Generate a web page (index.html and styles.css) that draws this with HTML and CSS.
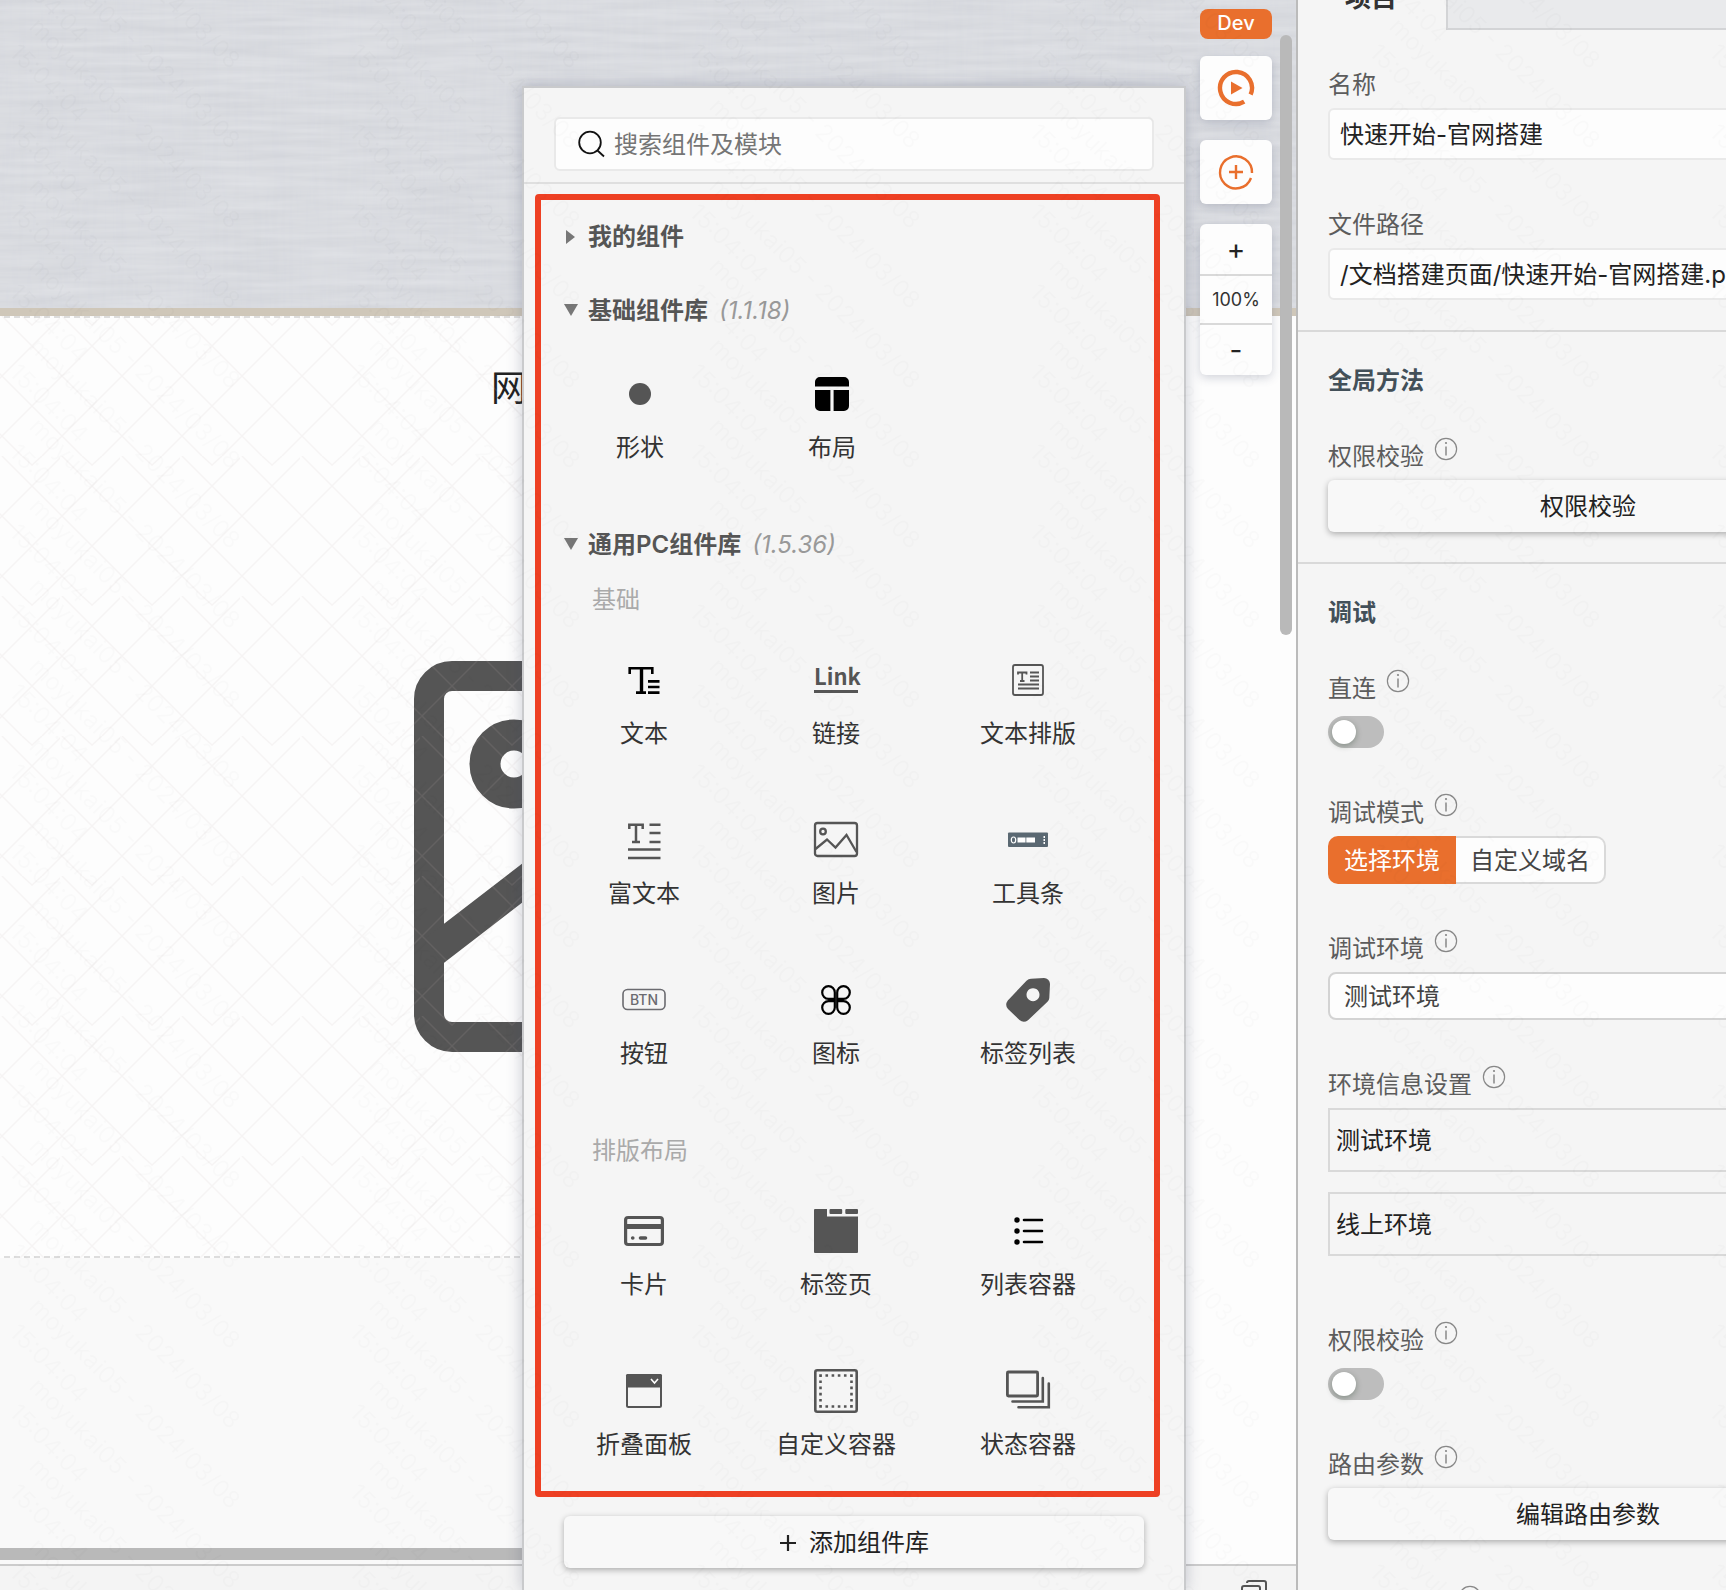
FILE: index.html
```html
<!DOCTYPE html>
<html lang="zh-CN">
<head>
<meta charset="utf-8">
<meta name="viewport" content="width=device-width, initial-scale=1">
<title>快速开始-官网搭建</title>
<link rel="stylesheet" href="styles.css">
</head>
<body>
<svg class="defs" aria-hidden="true">
  <defs>
    <filter id="warp" x="0" y="0" width="100%" height="100%">
      <feTurbulence type="fractalNoise" baseFrequency="0.15 0.01" numOctaves="3" seed="4"/>
      <feColorMatrix values="0 0 0 0 .6  0 0 0 0 .62  0 0 0 0 .68  .4 0 0 0 -.15"/>
    </filter>
    <filter id="weft" x="0" y="0" width="100%" height="100%">
      <feTurbulence type="fractalNoise" baseFrequency="0.01 0.15" numOctaves="3" seed="9"/>
      <feColorMatrix values="0 0 0 0 .9  0 0 0 0 .91  0 0 0 0 .93  .5 0 0 0 -.1"/>
    </filter>
    <pattern id="lattice" width="60" height="140" patternUnits="userSpaceOnUse">
      <path d="M2 0l140 140M-58 0L82 140M-118 0L22 140M62 0L-78 140M122 0L-18 140M182 0L42 140M22 0l10 9 10-9" fill="none" stroke="#c8b4b4" stroke-opacity=".12" stroke-width="1.5"/>
    </pattern>
    <g id="stamp">
      <text transform="translate(28 28) rotate(45)">moyukai05 - 2024/03/08</text>
      <text transform="translate(8 54) rotate(45)">15:04:04</text>
    </g>
    <pattern id="stamps" width="340" height="80" patternUnits="userSpaceOnUse">
      <use href="#stamp" y="-160"/><use href="#stamp" y="-80"/><use href="#stamp"/>
    </pattern>
    <symbol id="info" viewBox="0 0 24 24">
      <circle cx="12" cy="12" r="10.6" fill="none" stroke="#888" stroke-width="1.2"/>
      <path d="M12 9.5v9" stroke="#888" stroke-width="1.5"/><circle cx="12" cy="6" r="1.1" fill="#888"/>
    </symbol>
  </defs>
</svg>

<div class="app">
  <main class="workspace">
    <div class="canvas">
      <div class="banner">
        <svg class="fill" aria-hidden="true"><rect width="100%" height="100%" filter="url(#warp)"/><rect width="100%" height="100%" filter="url(#weft)"/></svg>
      </div>
      <div class="page">
        <div class="stage">
          <h1 class="site-title">网站标题</h1>
          <svg class="placeholder" viewBox="0 0 391 391" aria-hidden="true">
            <rect x="15" y="15" width="361" height="361" rx="23" fill="none" stroke="#555" stroke-width="30"/>
            <circle cx="100" cy="103" r="29" fill="none" stroke="#555" stroke-width="31"/>
            <path d="M20 290L185 163L376 309" fill="none" stroke="#555" stroke-width="31"/>
          </svg>
          <svg class="fill" aria-hidden="true"><rect width="100%" height="100%" fill="url(#lattice)"/></svg>
        </div>
        <div class="blank"></div>
      </div>
      <div class="h-scroll"></div>
    </div>
    <footer class="status">
      <svg width="26" height="26" viewBox="0 0 26 26" fill="none" stroke="#555" stroke-width="2" aria-hidden="true"><path d="M6 3V3a2 2 0 0 1 2-2H23a2 2 0 0 1 2 2V18"/><rect x="1" y="6" width="18" height="18" rx="2"/></svg>
    </footer>
    <div class="v-scroll"></div>

    <nav class="tools">
      <span class="env">Dev</span>
      <button class="tool" aria-label="预览">
        <svg width="40" height="40" viewBox="-20 -20 40 40" aria-hidden="true"><path d="M8.2 13.7A16 16 0 1 1 14.6 6.5" fill="none" stroke="#e96f2d" stroke-width="4.4"/><path d="M-5-6.5L6.5 0-5 6.5z" fill="#e96f2d"/></svg>
      </button>
      <button class="tool" aria-label="添加">
        <svg width="40" height="40" viewBox="-20 -20 40 40" fill="none" stroke="#e96f2d" stroke-width="2.4" aria-hidden="true"><path d="M15 6A16 16 0 1 1 16 1M0-7V7M-7 0H7"/></svg>
      </button>
      <div class="zoom">
        <button>+</button>
        <span>100%</span>
        <button>-</button>
      </div>
    </nav>

    <section class="panel">
      <header class="panel-head">
        <label class="search">
          <svg width="28" height="28" viewBox="0 0 28 28" fill="none" stroke="#111" stroke-width="1.8" aria-hidden="true"><circle cx="12" cy="12.500" r="10.800"/><path d="M19.500 20.500l6.500 6"/></svg>
          <input type="text" placeholder="搜索组件及模块" aria-label="搜索组件及模块">
        </label>
      </header>

      <div class="library">
        <div class="lib">
          <h2 class="lib-title"><span class="arrow arrow-right"></span>我的组件</h2>
        </div>

        <div class="lib">
          <h2 class="lib-title"><span class="arrow arrow-down"></span>基础组件库<em>(1.1.18)</em></h2>
          <div class="grid grid-top">
            <div class="item"><svg class="icon" viewBox="0 0 48 48"><circle cx="24" cy="24" r="11" fill="#555"/></svg>形状</div>
            <div class="item"><svg class="icon" viewBox="0 0 48 48"><path d="M7 16.5V12a5 5 0 0 1 5-5H36a5 5 0 0 1 5 5V16.5zM7 20H22.4V41H12a5 5 0 0 1-5-5zM25.6 20H41V36a5 5 0 0 1-5 5H25.6z"/></svg>布局</div>
          </div>
        </div>

        <div class="lib">
          <h2 class="lib-title"><span class="arrow arrow-down"></span>通用PC组件库<em>(1.5.36)</em></h2>
          <h3 class="group-title">基础</h3>
          <div class="grid">
            <div class="item"><svg class="icon" viewBox="0 0 48 48" fill="none" stroke="#000"><path d="M9.7 18V12.3H32.3V18" stroke-width="2.6"/><path d="M21.5 12V36" stroke-width="3.4"/><path d="M16 36.6H26M28 25.4H39.5M28 31H39.5M28 36.6H39.5" stroke-width="2.6"/></svg>文本</div>
            <div class="item"><span class="icon icon-link">Link</span>链接</div>
            <div class="item"><svg class="icon" viewBox="0 0 48 48" fill="none" stroke="#555" stroke-width="1.8"><rect x="9" y="9" width="30" height="30" rx="2"/><path d="M14 18.5V16.5H22.5V18.5M18.2 16.5V25M16 25H20.5M26 16.5H35M26 20.5H35M26 24.5H35M14 28.5H35M14 32.5H35"/></svg>文本排版</div>
            <div class="item"><svg class="icon" viewBox="0 0 48 48" fill="none" stroke="#555" stroke-width="2.5"><path d="M9.3 13V8.7H22.7V13M16 8.7V26M12 26H20M29.5 8.7H40.5M29.5 17H40.5M29.5 26H40.5M8 33.5H40.5M8 42H40.5"/></svg>富文本</div>
            <div class="item"><svg class="icon" viewBox="0 0 48 48" fill="none" stroke="#555" stroke-width="2.3"><rect x="3" y="7" width="42" height="33" rx="2.5"/><circle cx="11" cy="15.5" r="2.8"/><path d="M3.5 33L15 23.5L23.5 31.5L34.5 19L44.5 36"/></svg>图片</div>
            <div class="item"><svg class="icon" viewBox="0 0 48 48"><rect x="4" y="16.5" width="40" height="14.5" rx="1" fill="#5a6872"/><ellipse cx="9.5" cy="24" rx="2.2" ry="3" fill="none" stroke="#fff" stroke-width="1.2"/><path d="M13.5 21.5H21.5V26.5H13.5zM22.3 21.5H31V26.5H22.3zM39.5 20H41V22H39.5zM39.5 23H41V25H39.5zM39.5 26H41V28H39.5z" fill="#fff"/></svg>工具条</div>
            <div class="item"><svg class="icon" viewBox="0 0 48 48"><rect x="3" y="13.5" width="42" height="20" rx="4.5" fill="none" stroke="#6b6b70" stroke-width="1.6"/><text class="icon-btn" x="24" y="28.5">BTN</text></svg>按钮</div>
            <div class="item"><svg class="icon" viewBox="0 0 48 48" fill="none" stroke="#000" stroke-width="2.2"><path d="M22.8 16.5a6.3 6.3 0 1 0-6.3 6.3H22.8zM25.2 16.5a6.3 6.3 0 1 1 6.3 6.3H25.2zM22.8 31.5a6.3 6.3 0 1 1-6.3-6.3H22.8zM25.2 31.5a6.3 6.3 0 1 0 6.3-6.3H25.2z"/></svg>图标</div>
            <div class="item"><svg class="icon" viewBox="0 0 48 48"><path fill="#555" fill-rule="evenodd" d="M27 2.7L40 2a6 6 0 0 1 6 6L45.3 22Q45.2 24 43.5 25.7L24 44.3Q19.5 47.5 15.5 44L4 33Q.5 29 3.8 24.5L22.5 4.7Q24.5 2.8 27 2.7zM29 12.2a6.5 6.5 0 1 0 .01 0z"/></svg>标签列表</div>
          </div>
          <h3 class="group-title group-next">排版布局</h3>
          <div class="grid">
            <div class="item"><svg class="icon" viewBox="0 0 48 48" fill="none" stroke="#555"><rect x="5.6" y="10.5" width="36.8" height="27" rx="2.5" stroke-width="3.2"/><path d="M5 19.5H43" stroke-width="5"/><path d="M12.7 31H12.8M20.5 31H25.5" stroke-width="3.6" stroke-linecap="round"/></svg>卡片</div>
            <div class="item"><svg class="icon" viewBox="0 0 48 48" fill="#555"><path d="M3 2H15V9.5H46V45a1 1 0 0 1-1 1H3a1 1 0 0 1-1-1V3a1 1 0 0 1 1-1z"/><rect x="17.5" y="2" width="12.7" height="5" rx="1"/><rect x="33.3" y="2" width="12.7" height="5" rx="1"/></svg>标签页</div>
            <div class="item"><svg class="icon" viewBox="0 0 48 48"><circle cx="13" cy="13" r="2.7"/><circle cx="13" cy="24" r="2.7"/><circle cx="13" cy="35" r="2.7"/><path d="M20 13H38M20 24H38M20 35H38" stroke="#000" stroke-width="2.6" stroke-linecap="round"/></svg>列表容器</div>
            <div class="item"><svg class="icon" viewBox="0 0 48 48"><rect x="7" y="8" width="34" height="32" rx="1.5" fill="none" stroke="#555" stroke-width="2"/><path d="M6 8.5A1.5 1.5 0 0 1 7.5 7H40.5A1.5 1.5 0 0 1 42 8.5V20.5H6z" fill="#555"/><path d="M31 12L34.5 16L38 12" fill="none" stroke="#fff" stroke-width="1.6"/></svg>折叠面板</div>
            <div class="item"><svg class="icon" viewBox="0 0 48 48" fill="none" stroke="#555"><rect x="3.3" y="3.3" width="41.4" height="41.4" rx="2" stroke-width="2.6"/><path d="M7.3 8.5H40.7M7.3 39.5H40.7M8.5 7.3V40.7M39.5 7.3V40.7" stroke-width="2.6" stroke-dasharray="2.6 3.56"/></svg>自定义容器</div>
            <div class="item"><svg class="icon" viewBox="0 0 48 48" fill="none" stroke="#555"><rect x="3.4" y="5" width="30.2" height="24" rx="1" stroke-width="2.8"/><path d="M8.5 34.5H38.8V11M14.5 40.2H44.8V16.5" stroke-width="2.6" stroke-linecap="round"/></svg>状态容器</div>
          </div>
        </div>
      </div>

      <button class="raised add"><svg width="18" height="18" viewBox="0 0 18 18" stroke="#222" stroke-width="2.2" aria-hidden="true"><path d="M9 1V17M1 9H17"/></svg>添加组件库</button>
    </section>
  </main>

  <aside class="sidebar">
    <div class="tabs"><button class="tab">项目</button><div class="tab-rest"></div></div>
    <div class="form">
      <section class="block block-first">
        <div class="field"><label class="label" for="name">名称</label><input class="text" id="name" type="text" value="快速开始-官网搭建"></div>
        <div class="field"><label class="label" for="path">文件路径</label><input class="text" id="path" type="text" value="/文档搭建页面/快速开始-官网搭建.page"></div>
      </section>
      <section class="block">
        <h2 class="block-title">全局方法</h2>
        <div class="field"><span class="label">权限校验<svg class="info"><use href="#info"/></svg></span><button class="raised">权限校验</button></div>
      </section>
      <section class="block">
        <h2 class="block-title">调试</h2>
        <div class="field"><label class="label" for="direct">直连<svg class="info"><use href="#info"/></svg></label><input class="switch" id="direct" type="checkbox"></div>
        <div class="field"><span class="label">调试模式<svg class="info"><use href="#info"/></svg></span>
          <div class="segments"><button class="segment on">选择环境</button><button class="segment">自定义域名</button></div></div>
        <div class="field"><label class="label" for="env">调试环境<svg class="info"><use href="#info"/></svg></label>
          <select class="select" id="env"><option>测试环境</option></select></div>
        <div class="field"><span class="label">环境信息设置<svg class="info"><use href="#info"/></svg></span>
          <div class="cards"><div class="card">测试环境</div><div class="card">线上环境</div></div></div>
        <div class="field"><label class="label" for="auth">权限校验<svg class="info"><use href="#info"/></svg></label><input class="switch" id="auth" type="checkbox"></div>
        <div class="field"><span class="label">路由参数<svg class="info"><use href="#info"/></svg></span><button class="raised">编辑路由参数</button></div>
        <div class="field"><span class="label label-bare"><svg class="info"><use href="#info"/></svg></span></div>
      </section>
    </div>
  </aside>
  <svg class="fill watermark" aria-hidden="true"><rect width="100%" height="100%" fill="url(#stamps)"/></svg>
</div>
</body>
</html>
```

FILE: styles.css
```css
* { box-sizing: border-box; }

body {
  margin: 0;
  font-family: Inter, "Noto Sans CJK SC", sans-serif;
  font-size: 24px;
  line-height: 32px;
  color: #333;
}

h1, h2, h3 { margin: 0; font-size: 24px; }

button, input, select { font: inherit; color: #222; margin: 0; }
button { padding: 0; border: 0; }

.defs { position: absolute; width: 0; height: 0; }
.fill { position: absolute; inset: 0; width: 100%; height: 100%; pointer-events: none; }
.watermark { font-size: 24px; fill: #000; opacity: .01; }

.app {
  position: relative;
  display: grid;
  grid-template-columns: minmax(0, 1fr) 430px;
  height: 100vh;
  overflow: hidden;
}

/* Canvas */
.workspace { position: relative; display: flex; flex-direction: column; overflow: hidden; }
.canvas { flex: 1; display: flex; flex-direction: column; min-height: 0; background: #fdfdfd; }
.banner { position: relative; flex: none; height: 316px; background: #d5d7dc; border-bottom: 8px solid #cfc7b9; }
.page { flex: 1; display: flex; flex-direction: column; width: calc(100% - 200px); background: #f9f9f9; min-height: 0; }
.stage {
  position: relative;
  flex: none;
  height: 942px;
  padding: 44px 0 0 414px;
  overflow: hidden;
  background:
    repeating-linear-gradient(90deg, #ddd 0 6px, transparent 6px 10px) 4px 0 / 100% 2px no-repeat,
    repeating-linear-gradient(90deg, #ddd 0 6px, transparent 6px 10px) 4px 100% / 100% 2px no-repeat,
    #fdfdfd;
}
.site-title { padding-left: 77px; font-size: 36px; line-height: 56px; font-weight: 400; color: #222; }
.placeholder { display: block; width: 391px; height: 391px; margin-top: 245px; }
.blank { flex: 1; }
.h-scroll { flex: none; width: calc(100% - 200px); height: 16px; background: #b9b9b9; border-bottom: 4px solid #f9f9f9; }
.status { flex: none; display: flex; justify-content: flex-end; height: 26px; padding: 14px 29px 0 0; border-top: 2px solid #ccc; background: #f4f4f4; }
.status svg { flex: none; }
.v-scroll { position: absolute; top: 35px; right: 4px; width: 12px; height: 600px; border-radius: 6px; background: #b9b9b9; }

/* Floating tools */
.tools { position: absolute; top: 9px; right: 24px; width: 72px; display: flex; flex-direction: column; gap: 20px; }
.env { height: 30px; margin-bottom: -3px; border-radius: 8px; background: #e96f2d; color: #fff; font-size: 20px; line-height: 28px; text-align: center; font-weight: 500; }
.tool, .zoom { border-radius: 6px; background: #fdfdfd; box-shadow: 0 3px 10px rgba(60, 70, 100, .22); }
.tool { display: flex; align-items: center; justify-content: center; height: 64px; }
.zoom { display: flex; flex-direction: column; text-align: center; }
.zoom button { height: 50px; background: none; font-size: 28px; }
.zoom span { height: 51px; border: solid #d9d9d9; border-width: 2px 0; font-size: 18px; line-height: 47px; }

/* Component panel */
.panel {
  position: absolute;
  top: 86px;
  right: 110px;
  bottom: 0;
  width: 664px;
  display: flex;
  flex-direction: column;
  border: 2px solid #c9cacc;
  border-bottom: 0;
  background: #f5f5f5;
  box-shadow: 0 0 14px rgba(60, 70, 100, .28);
}
.panel-head { padding: 29px 30px 11px; border-bottom: 2px solid #dfdfdf; }
.search { display: flex; align-items: center; gap: 8px; height: 54px; padding: 0 22px; border: 2px solid #e9e9e9; border-radius: 6px; background: #fdfdfd; }
.search input { flex: 1; min-width: 0; padding: 1px 0 0; border: 0; outline: 0; background: none; }
.search input::placeholder { color: #757575; opacity: 1; }

.library { display: flex; flex-direction: column; gap: 34px; margin: 10px 24px 19px 11px; padding: 16px 0 4px; border: 6px solid #ee4023; border-radius: 4px; }
.lib-title { display: flex; align-items: center; height: 40px; padding: 2px 0 0 23px; font-weight: 600; color: #555; white-space: nowrap; }
.lib-title em { margin-left: 11px; font-weight: 400; color: #999; }
.arrow { width: 14px; height: 14px; margin-right: 10px; }
.arrow::before { content: ""; display: block; border: 0 solid transparent; }
.arrow-right::before { width: 0; margin-left: 2px; border-width: 7px 0 7px 9px; border-left-color: #777; }
.arrow-down::before { border-width: 12px 7px 0; border-top-color: #777; }
.group-title { padding: 20px 0 0 51px; font-weight: 400; color: #aaa; }
.group-next { padding-top: 39px; }
.grid { display: grid; grid-template-columns: repeat(3, 192px); padding-left: 7px; }
.grid-top { padding-left: 3px; }
.item { display: flex; flex-direction: column; align-items: center; gap: 13px; padding: 40px 0 25px; line-height: 34px; }
.icon { display: block; width: 48px; height: 48px; }
.icon-link { width: 44px; height: 37px; margin-bottom: 11px; border-bottom: 3px solid #555; font: 700 22px/38px "Noto Sans CJK SC", sans-serif; color: #555; text-align: center; }
.icon-btn { font: 500 14px Inter, sans-serif; fill: #6b6b70; text-anchor: middle; }

.raised {
  display: flex;
  align-items: center;
  justify-content: center;
  gap: 12px;
  width: 100%;
  height: 52px;
  padding-top: 2px;
  border-radius: 6px;
  background: #f8f8f8;
  box-shadow: 0 2px 6px rgba(0, 0, 0, .3);
}
.add { width: auto; margin: 0 40px; flex: none; }

/* Property sidebar */
.sidebar { border-left: 2px solid #bbb; background: #f5f5f5; overflow: hidden; }
.tabs { display: flex; align-items: flex-end; height: 30px; overflow: hidden; }
.tab { flex: none; width: 148px; height: 64px; padding: 0 2px 0 0; background: none; font-size: 26px; line-height: 32px; font-weight: 600; color: #333; }
.tab-rest { flex: 1; height: 30px; border: solid #d3d4d6; border-width: 0 0 2px 2px; background: #e9eaec; }
.form { width: 580px; }
.block { display: flex; flex-direction: column; gap: 48px; padding: 32px 30px 30px; border-top: 2px solid #d9d9d9; }
.block-first { padding-top: 38px; border-top: 0; }
.block-title { height: 32px; margin-bottom: -4px; line-height: 34px; font-weight: 600; color: #435059; }
.field { display: flex; flex-direction: column; align-items: flex-start; gap: 8px; }
.label { display: flex; align-items: center; gap: 10px; height: 32px; padding-top: 2px; color: #5c5c5c; }
.label-bare { padding-left: 130px; }
.info { width: 24px; height: 24px; margin-bottom: 16px; }
.text { width: 100%; height: 52px; padding: 0 10px 3px; border: 2px solid #e9e9e9; border-radius: 6px; background: #fdfdfd; }
.switch { appearance: none; width: 56px; height: 32px; margin-top: 4px; padding: 4px; border-radius: 16px; background: #bdbdbd; }
.switch::before { content: ""; display: block; width: 24px; height: 24px; border-radius: 12px; background: #fff; box-shadow: 0 2px 6px rgba(0, 35, 11, .3); }
.segments { display: flex; }
.segment { height: 48px; padding: 2px 14px 0; border: 2px solid #d9d9d9; border-left: 0; border-radius: 0 10px 10px 0; background: #fdfdfd; color: #444; }
.segment.on { padding: 2px 16px 0; border: 0; border-radius: 10px 0 0 10px; background: #e96f2d; color: #fff; }
.select { appearance: none; width: 100%; height: 48px; padding: 2px 14px 0; border: 2px solid #d3d3d3; border-radius: 8px; background: #fdfdfd; color: #444; }
.cards { display: flex; flex-direction: column; gap: 20px; width: 100%; margin-bottom: 20px; }
.card { height: 64px; padding: 0 6px; border: 2px solid #d9d9d9; line-height: 62px; color: #222; }
```
